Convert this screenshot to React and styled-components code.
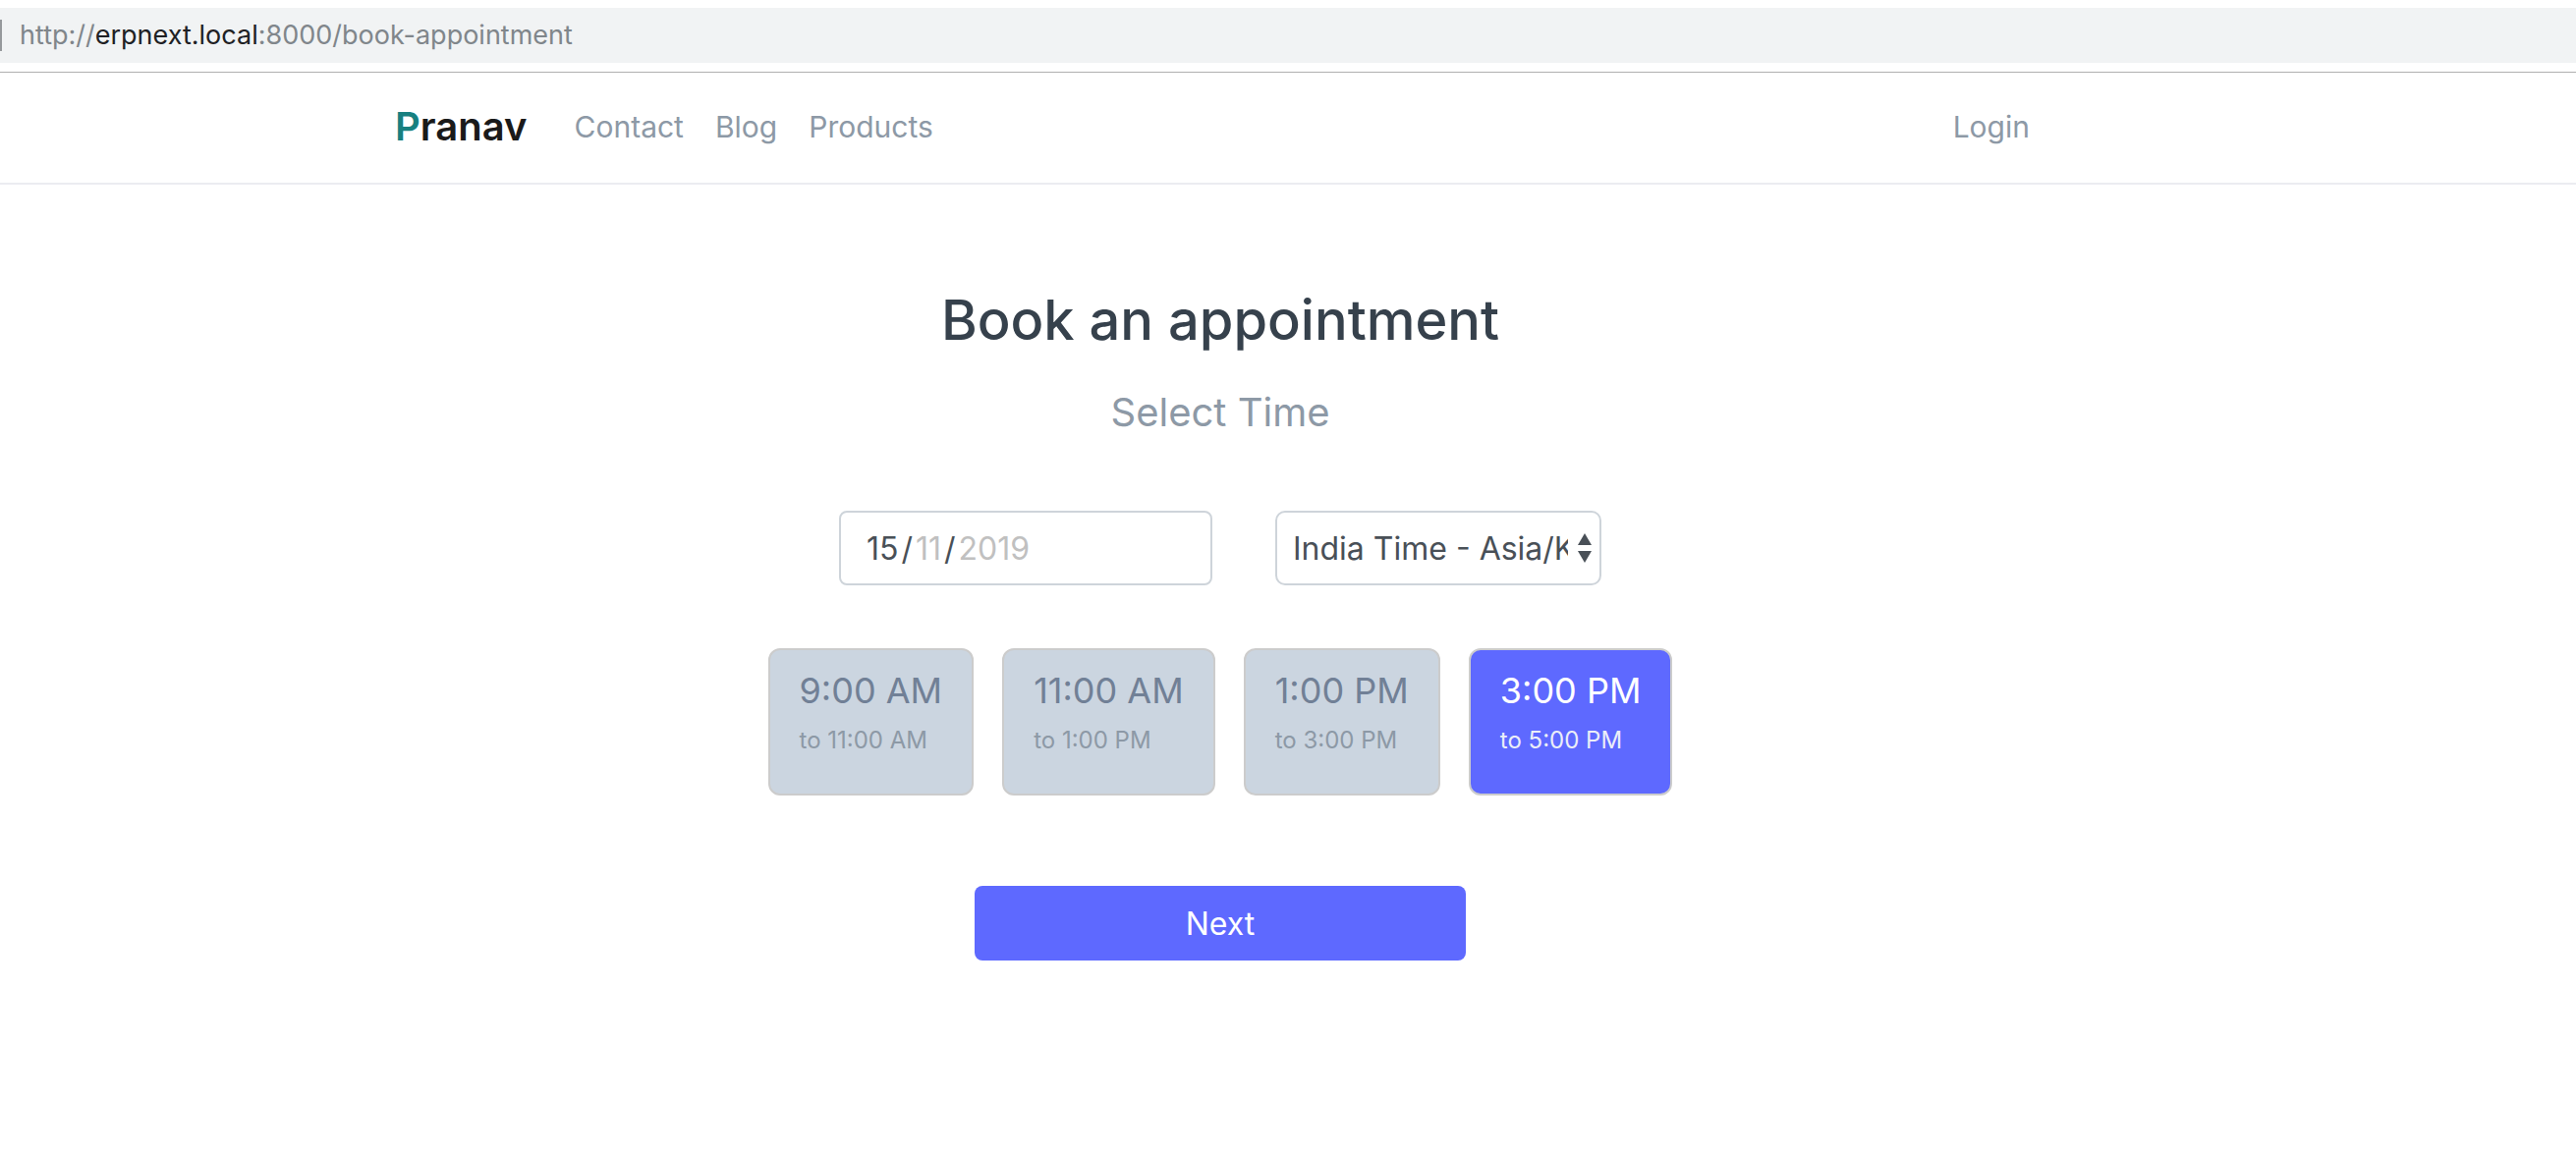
import React, { useState } from "react";
import styled, { createGlobalStyle } from "styled-components";

const GlobalStyle = createGlobalStyle`
  *, *::before, *::after { box-sizing: border-box; }
  body {
    margin: 0;
    background: #ffffff;
    font-family: Inter, "Liberation Sans", sans-serif;
    -webkit-font-smoothing: antialiased;
  }
  button, input, select { font: inherit; margin: 0; }
`;

const AddressBar = styled.div`
  padding: 8px 0 9px;
  border-bottom: 1px solid #b0b0b0;
`;

const AddressField = styled.div`
  display: flex;
  align-items: center;
  gap: 18px;
  height: 56px;
  background: #f1f3f4;
`;

const AddressDivider = styled.span`
  width: 2px;
  height: 32px;
  background: #96999c;
`;

const Address = styled.span`
  font-size: 27px;
  line-height: 36px;
  color: #80868b;

  strong {
    font-weight: 400;
    color: #202124;
  }
`;

const Navbar = styled.header`
  padding-right: 138px;
  border-bottom: 2px solid #ebecf1;
`;

const NavInner = styled.nav`
  display: flex;
  align-items: center;
  max-width: 1680px;
  height: 112px;
  margin: 0 auto;
  padding-bottom: 2px;
`;

const Brand = styled.a`
  margin-right: 32px;
  font-size: 40px;
  font-weight: 600;
  line-height: 48px;
  color: #1a1a1a;
  text-decoration: none;

  span { color: #178080; }
`;

const NavLink = styled.a`
  padding: 0 16px;
  margin-left: ${(p) => (p.$end ? "auto" : "0")};
  font-size: 30px;
  line-height: 40px;
  color: #8d99a6;
  text-decoration: none;
`;

const Main = styled.main`
  display: flex;
  flex-direction: column;
  align-items: center;
  padding: 104px 138px 100px 0;
`;

const Title = styled.h1`
  margin: 0;
  font-size: 56px;
  font-weight: 500;
  line-height: 68px;
  color: #36414c;
`;

const Subtitle = styled.p`
  margin: 36px 0 0;
  font-size: 40px;
  line-height: 48px;
  color: #8d99a6;
`;

const Fields = styled.div`
  display: flex;
  gap: 64px;
  margin-top: 76px;
`;

const DateField = styled.div`
  display: flex;
  align-items: center;
  width: 380px;
  height: 76px;
  padding: 2px 23px 0;
  border: 2px solid #ced4da;
  border-radius: 8px;
  font-size: 32px;
  line-height: 40px;
  color: #495057;
`;

const DatePart = styled.input`
  field-sizing: content;
  padding: 0 3px;
  border: 0;
  outline: 0;
  background: transparent;
  line-height: 40px;
  color: ${(p) => (p.$muted ? "#c0c0c0" : "#495057")};
`;

const SelectBox = styled.div`
  position: relative;
  width: 332px;
  height: 76px;
`;

const Select = styled.select`
  appearance: none;
  width: 100%;
  height: 100%;
  padding: 2px 32px 0 16px;
  border: 2px solid #ced4da;
  border-radius: 10px;
  background: #ffffff;
  font-size: 32px;
  line-height: 40px;
  color: #495057;
`;

const SelectArrows = styled.svg`
  position: absolute;
  top: 23px;
  right: 9px;
  pointer-events: none;
`;

const Slots = styled.div`
  display: flex;
  gap: 29px;
  margin-top: 64px;
`;

const Slot = styled.button`
  display: flex;
  flex-direction: column;
  align-items: flex-start;
  gap: 14px;
  height: 150px;
  padding: 19px 30px;
  border: 2px solid #cccccc;
  border-radius: 12px;
  background: ${(p) => (p.$selected ? "#5e69ff" : "#cbd5e0")};
  color: ${(p) => (p.$selected ? "#ffffff" : "#718096")};
  cursor: pointer;
`;

const SlotStart = styled.span`
  font-size: 36px;
  line-height: 44px;
`;

const SlotEnd = styled.span`
  font-size: 24px;
  line-height: 30px;
  color: ${(p) => (p.$selected ? "#ebeef8" : "#8d99a6")};
`;

const NextButton = styled.button`
  width: 500px;
  height: 76px;
  margin-top: 92px;
  padding: 2px 0 0;
  border: 0;
  border-radius: 8px;
  background: #5e69ff;
  font-size: 32px;
  line-height: 40px;
  color: #ffffff;
  cursor: pointer;
`;

const slots = [
  { start: "9:00 AM", end: "to 11:00 AM" },
  { start: "11:00 AM", end: "to 1:00 PM" },
  { start: "1:00 PM", end: "to 3:00 PM" },
  { start: "3:00 PM", end: "to 5:00 PM" },
];

export default function App() {
  const [selected, setSelected] = useState(3);

  return (
    <>
      <GlobalStyle />
      <AddressBar>
        <AddressField>
          <AddressDivider />
          <Address>
            http://<strong>erpnext.local</strong>:8000/book-appointment
          </Address>
        </AddressField>
      </AddressBar>
      <Navbar>
        <NavInner>
          <Brand href="#"><span>P</span>ranav</Brand>
          <NavLink href="#">Contact</NavLink>
          <NavLink href="#">Blog</NavLink>
          <NavLink href="#">Products</NavLink>
          <NavLink href="#" $end>Login</NavLink>
        </NavInner>
      </Navbar>
      <Main>
        <Title>Book an appointment</Title>
        <Subtitle>Select Time</Subtitle>
        <Fields>
          <DateField role="group" aria-label="Date">
            <DatePart aria-label="Day" inputMode="numeric" maxLength={2} defaultValue="15" />
            <span>/</span>
            <DatePart aria-label="Month" inputMode="numeric" maxLength={2} defaultValue="11" $muted />
            <span>/</span>
            <DatePart aria-label="Year" inputMode="numeric" maxLength={4} defaultValue="2019" $muted />
          </DateField>
          <SelectBox>
            <Select aria-label="Timezone" defaultValue="Asia/Kolkata">
              <option value="Asia/Kolkata">India Time - Asia/Kolkata</option>
            </Select>
            <SelectArrows width="16" height="30" viewBox="0 0 16 30" fill="#495057" aria-hidden="true">
              <path d="M8 0L15 12H1Z" />
              <path d="M8 30L15 18H1Z" />
            </SelectArrows>
          </SelectBox>
        </Fields>
        <Slots>
          {slots.map((slot, i) => (
            <Slot
              key={slot.start}
              type="button"
              aria-pressed={selected === i}
              $selected={selected === i}
              onClick={() => setSelected(i)}
            >
              <SlotStart>{slot.start}</SlotStart>
              <SlotEnd $selected={selected === i}>{slot.end}</SlotEnd>
            </Slot>
          ))}
        </Slots>
        <NextButton type="button">Next</NextButton>
      </Main>
    </>
  );
}
